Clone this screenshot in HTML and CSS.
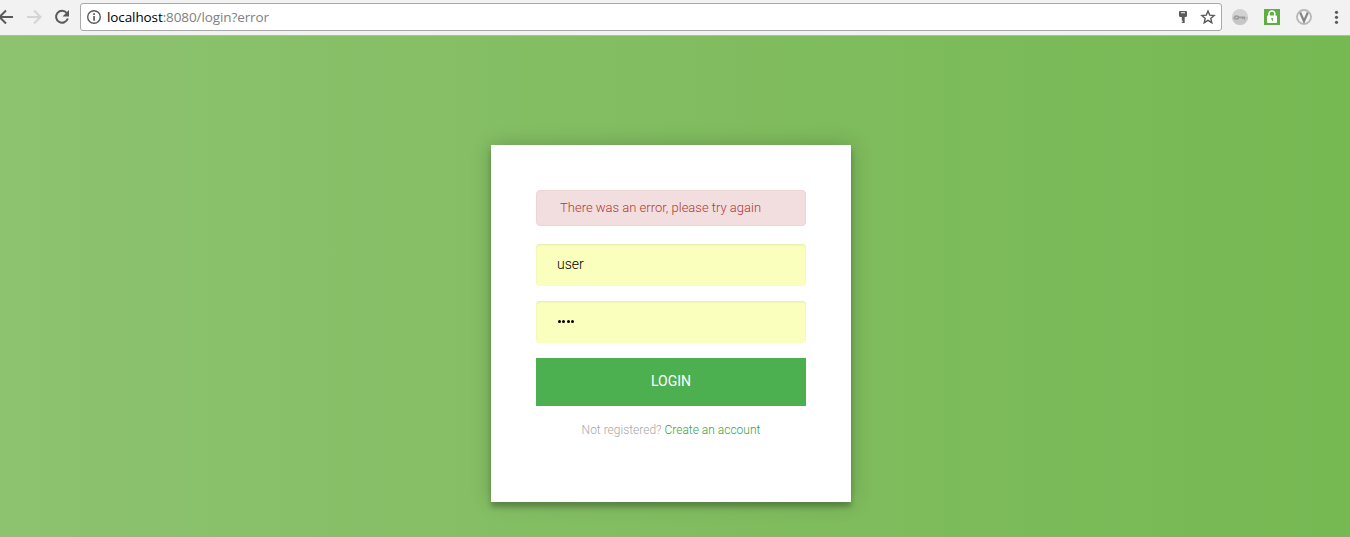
FILE: index.html
```html
<!DOCTYPE html>
<html lang="en">
<head>
<meta charset="utf-8">
<title>Login</title>
<link rel="stylesheet" href="styles.css">
</head>
<body>
<header class="toolbar">
  <nav class="nav">
    <svg width="80" height="35" viewBox="0 0 80 35" fill="none" stroke-width="2">
      <path d="M13 17H0M6 10.500L-.5 17 6 23.500" stroke="#5a5a5a"/>
      <path d="M27 17h13M34 10.500l6.500 6.500-6.500 6.500" stroke="#d4d4d4"/>
      <path d="M66.800 13A6 6 0 1 0 67.800 18.500" stroke="#5a5a5a"/>
      <path d="M69 10v6.500h-6.500z" fill="#5a5a5a"/>
    </svg>
  </nav>
  <div class="omnibox">
    <svg class="info" width="16" height="16" viewBox="0 0 16 16">
      <circle cx="8" cy="8" r="6.300" fill="none" stroke="#5a5a5a" stroke-width="1.400"/>
      <path d="M7.200 4.200h1.700v1.700H7.200zM7.200 7h1.700v4.800H7.200z" fill="#5a5a5a"/>
    </svg>
    <div class="url"><span class="host">localhost</span>:8080/login?error</div>
    <svg width="12" height="16" viewBox="0 0 12 16">
      <path fill="#5a5a5a" fill-rule="evenodd" d="M3 2h6q1 0 1 1v3.500q0 1.500-1.500 1.500H7.700v6H4.800v-1.200h1v-1h-1V8H3.500Q2 8 2 6.500V3q0-1 1-1zM4 3.200v1h4v-1z"/>
    </svg>
    <svg class="star" width="16" height="16" viewBox="0 0 16 16">
      <path d="M8 2l1.700 4.100 4.400.4-3.300 2.900 1 4.300L8 11.400l-3.800 2.300 1-4.300-3.300-2.900 4.400-.4z" fill="none" stroke="#5a5a5a" stroke-width="1.400"/>
    </svg>
  </div>
  <div class="extensions">
    <svg width="16" height="16" viewBox="0 0 16 16">
      <circle cx="8" cy="8" r="8" fill="#d2d2d2"/>
      <path d="M0 8a8 8 0 0 0 16 0z" fill="#c6c6c6"/>
      <ellipse cx="4.500" cy="8.500" rx="2" ry="1.500" fill="none" stroke="#9b9b9b" stroke-width="1.400"/>
      <path d="M6.500 8.300h6.800M12.300 8v2.500M10.300 8v2" stroke="#9b9b9b" stroke-width="1.400"/>
    </svg>
    <svg width="16" height="16" viewBox="0 0 16 16">
      <path fill="#5fae43" d="M0 0h16v16H0z"/>
      <path d="M5 7V4.800a2.900 2.900 0 0 1 5.800 0V7" fill="none" stroke="#fff" stroke-width="1.500"/>
      <rect x="3" y="6.500" width="10" height="7.500" rx="1" fill="#fff"/>
      <path d="M7.200 9h1.700v3H8v-1.500h-.8z" fill="#5fae43"/>
    </svg>
    <svg width="16" height="16" viewBox="0 0 16 16">
      <circle cx="8" cy="8" r="7" fill="#f6f6f6" stroke="#b9b9b9" stroke-width="1.900"/>
      <path d="M4.200 3.500L8 12.300l3.800-8.800" fill="none" stroke="#868686" stroke-width="2.200"/>
    </svg>
    <svg width="16" height="16" viewBox="0 0 16 16" fill="#5a5a5a">
      <circle cx="8.500" cy="3.300" r="1.600"/><circle cx="8.500" cy="8.300" r="1.600"/><circle cx="8.500" cy="13.300" r="1.600"/>
    </svg>
  </div>
</header>
<main class="page">
  <form class="card">
    <div class="alert"><span class="alert-text">There was an error, please try again</span></div>
    <div class="field"><span class="username">user</span></div>
    <div class="field"><span class="dots"><i></i><i></i><i></i><i></i></span></div>
    <div class="button">LOGIN</div>
    <p class="message"><span class="message-text">Not registered? <a class="link">Create an account</a></span></p>
  </form>
</main>
</body>
</html>
```
FILE: styles.css
```css
* { box-sizing: border-box; }
body {
  margin: 0;
  height: 537px;
  overflow: hidden;
  display: flex;
  flex-direction: column;
  font-family: Roboto, "Liberation Sans", sans-serif;
}
svg { display: block; flex: none; }
.toolbar {
  height: 36px;
  flex: none;
  display: flex;
  background: #f2f2f2;
  border-bottom: 1px solid #b6b4b6;
}
.nav { width: 80px; }
.omnibox {
  width: 1142px;
  height: 28px;
  margin-top: 3px;
  padding: 0 5px;
  display: flex;
  align-items: center;
  background: #fff;
  border: 1px solid #a9a9a9;
  border-radius: 3px;
}
.url {
  flex: 1;
  margin-left: 5px;
  font: 13.500px/26px "Open Sans", "Noto Sans", sans-serif;
  letter-spacing: -.1px;
  color: #808080;
}
.host { color: #000; }
.star { margin-left: 11px; }
.extensions {
  display: flex;
  gap: 16px;
  padding: 9px 0 0 10px;
}
.page {
  flex: 1;
  padding: 109px 0 0 491px;
  background: linear-gradient(to left, #76b852, #8dc26f);
}
.card {
  width: 360px;
  height: 357px;
  padding: 45px;
  background: #fff;
  box-shadow: 0 0 20px rgba(0, 0, 0, .2), 0 5px 5px rgba(0, 0, 0, .24);
}
.alert {
  height: 36px;
  margin-bottom: 18px;
  padding-left: 23px;
  border: 1px solid #eed3d7;
  border-radius: 4px;
  background: #f2dede;
  color: #ae3a38;
  font-size: 13px;
  font-weight: 300;
  line-height: 34px;
}
.field {
  height: 42px;
  margin-bottom: 15px;
  padding-left: 21px;
  border-radius: 4px;
  background: #faffbd;
  box-shadow: inset 0 1px 2px rgba(0, 0, 0, .09);
  color: #000;
  font-size: 14px;
  font-weight: 300;
  line-height: 41px;
}
.dots {
  display: flex;
  gap: 1.500px;
  padding: 19px 0 0 .5px;
}
.dots i {
  width: 3px;
  height: 3px;
  border-radius: 50%;
  background: #000;
}
.button {
  height: 48px;
  background: #4caf50;
  color: #fff;
  font-size: 14px;
  line-height: 47px;
  text-align: center;
}
.message {
  margin: 15px 0 0;
  color: #a8a8a8;
  font-size: 12px;
  font-weight: 300;
  line-height: 18px;
  text-align: center;
}
.link { color: #38a03e; }
```
